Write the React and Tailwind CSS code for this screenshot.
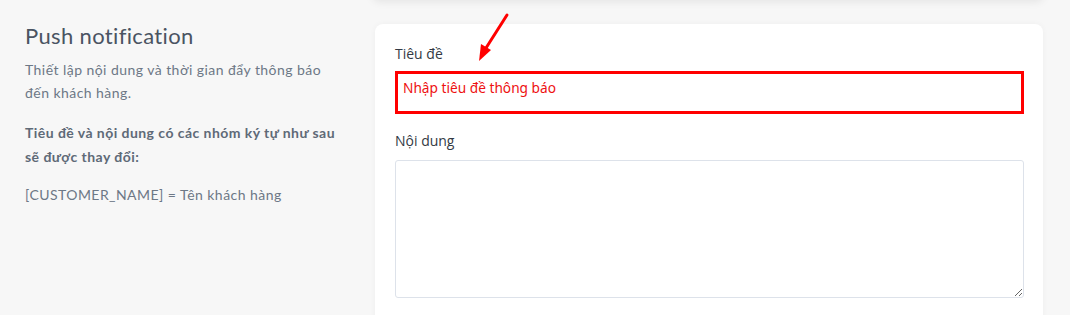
export default function App() {
  return (
    <div className="w-[1070px] h-[315px] overflow-hidden bg-[#f7f7f7] relative" style={{ fontFamily: '"Lato", "Open Sans", sans-serif' }}>
      <div className="flex pt-[24px]">
        <div className="w-[375px] shrink-0 pl-[25px]">
          <div className="w-[316px]">
            <h2 className="text-[22px] leading-[26px] text-[#4a5462] font-normal mt-[-1px] tracking-[0.35px]">Push notification</h2>
            <p className="mt-[9px] text-[14px] leading-[23px] text-[#6d7886] tracking-[0.45px]">Thiết lập nội dung và thời gian đẩy thông báo đến khách hàng.</p>
            <p className="mt-[17px] text-[14px] leading-[24px] font-bold text-[#5f6a77] tracking-[0.45px]">Tiêu đề và nội dung có các nhóm ký tự như sau sẽ được thay đổi:</p>
            <p className="mt-[14px] text-[14px] leading-[24px] text-[#6d7886] tracking-[0.45px]">[CUSTOMER_NAME] = Tên khách hàng</p>
          </div>
        </div>
        <div className="w-[668px] shrink-0 bg-white rounded-[8px] h-[320px] shadow-[0_0_6px_rgba(0,0,0,0.04)] px-[20px] pt-[20px]">
          <label className="block text-[14px] leading-[20px] text-[#333a44]" style={{ fontFamily: '"Open Sans", "Noto Sans", sans-serif' }}>Tiêu đề</label>
          <div className="mt-[7px] w-[629px] h-[43px] border-[3px] border-[#ff0000] flex items-center pl-[5px] pb-[9px]">
            <span className="text-[13.7px] text-[#ee1111]" style={{ fontFamily: '"Noto Sans", "Open Sans", sans-serif' }}>Nhập tiêu đề thông báo</span>
          </div>
          <label className="block mt-[17px] text-[14px] leading-[20px] text-[#333a44]" style={{ fontFamily: '"Open Sans", "Noto Sans", sans-serif' }}>Nội dung</label>
          <textarea className="mt-[9px] block w-[629px] h-[138px] border border-[#dde2ea] rounded-[3px] resize-y outline-none"></textarea>
        </div>
      </div>
      <div className="absolute left-[372px] top-[-20px] w-[672px] h-[20px] bg-white shadow-[0_2px_8px_rgba(0,0,0,0.08)] rounded-b-[8px]"></div>
      <svg className="absolute left-0 top-0" width="1070" height="315">
        <line x1="507" y1="15" x2="486" y2="48" stroke="#ff0000" strokeWidth="3" strokeLinecap="round" />
        <polygon points="479,61 481,44 491,50" fill="#ff0000" />
      </svg>
    </div>
  );
}
